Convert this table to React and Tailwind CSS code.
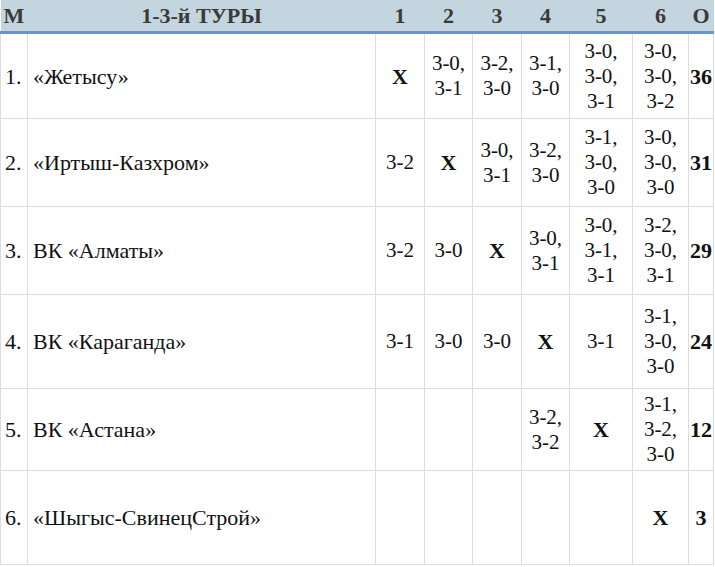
import React from "react";

const teams = [
  { n: "1.", name: "«Жетысу»", h: "h-[86px]", cells: ["X", "3-0,\n3-1", "3-2,\n3-0", "3-1,\n3-0", "3-0,\n3-0,\n3-1", "3-0,\n3-0,\n3-2"], pts: "36" },
  { n: "2.", name: "«Иртыш-Казхром»", h: "h-[88px]", cells: ["3-2", "X", "3-0,\n3-1", "3-2,\n3-0", "3-1,\n3-0,\n3-0", "3-0,\n3-0,\n3-0"], pts: "31" },
  { n: "3.", name: "ВК «Алматы»", h: "h-[88px]", cells: ["3-2", "3-0", "X", "3-0,\n3-1", "3-0,\n3-1,\n3-1", "3-2,\n3-0,\n3-1"], pts: "29" },
  { n: "4.", name: "ВК «Караганда»", h: "h-[94px]", cells: ["3-1", "3-0", "3-0", "X", "3-1", "3-1,\n3-0,\n3-0"], pts: "24" },
  { n: "5.", name: "ВК «Астана»", h: "h-[82px]", cells: ["", "", "", "3-2,\n3-2", "X", "3-1,\n3-2,\n3-0"], pts: "12" },
  { n: "6.", name: "«Шыгыс-СвинецСтрой»", h: "h-[94px]", cells: ["", "", "", "", "", "X"], pts: "3" },
];

const colW = ["w-[49px]", "w-[48px]", "w-[49px]", "w-[48px]", "w-[63px]", "w-[56px]"];

export default function App() {
  return (
    <div className="w-[715px] h-[567px] bg-white font-['Liberation_Serif',serif] text-[#111]">
      <table className="table-fixed border-collapse w-[713px] text-[21px]">
        <colgroup>
          <col className="w-[27px]" />
          <col className="w-[348px]" />
          {colW.map((w, i) => (
            <col key={i} className={w} />
          ))}
          <col className="w-[25px]" />
        </colgroup>
        <thead>
          <tr className="h-[31px] bg-[#c4d5df] text-[#3a3a3a] text-[22px] leading-[31px] font-bold border-b-[3px] border-b-[#5b9bd5]">
            <th className="p-0 text-left pl-[3px] font-bold">М</th>
            <th className="p-0 text-center font-bold">1-3-й ТУРЫ</th>
            {["1", "2", "3", "4", "5", "6"].map((c) => (
              <th key={c} className="p-0 text-center font-bold">{c}</th>
            ))}
            <th className="p-0 text-center font-bold">О</th>
          </tr>
        </thead>
        <tbody>
          {teams.map((t) => (
            <tr key={t.n} className={t.h}>
              <td className="border border-[#dcdcdc] pl-[4px] align-middle text-[22px]">{t.n}</td>
              <td className="border border-[#dcdcdc] pl-[5px] align-middle text-[22px]">{t.name}</td>
              {t.cells.map((c, i) => (
                <td
                  key={i}
                  className={`border border-[#dcdcdc] text-center align-middle whitespace-pre-line leading-[25px] ${c === "X" ? "font-bold text-[22px]" : ""}`}
                >
                  {c}
                </td>
              ))}
              <td className="border border-[#dcdcdc] text-center align-middle font-bold text-[22px]">{t.pts}</td>
            </tr>
          ))}
        </tbody>
      </table>
    </div>
  );
}
